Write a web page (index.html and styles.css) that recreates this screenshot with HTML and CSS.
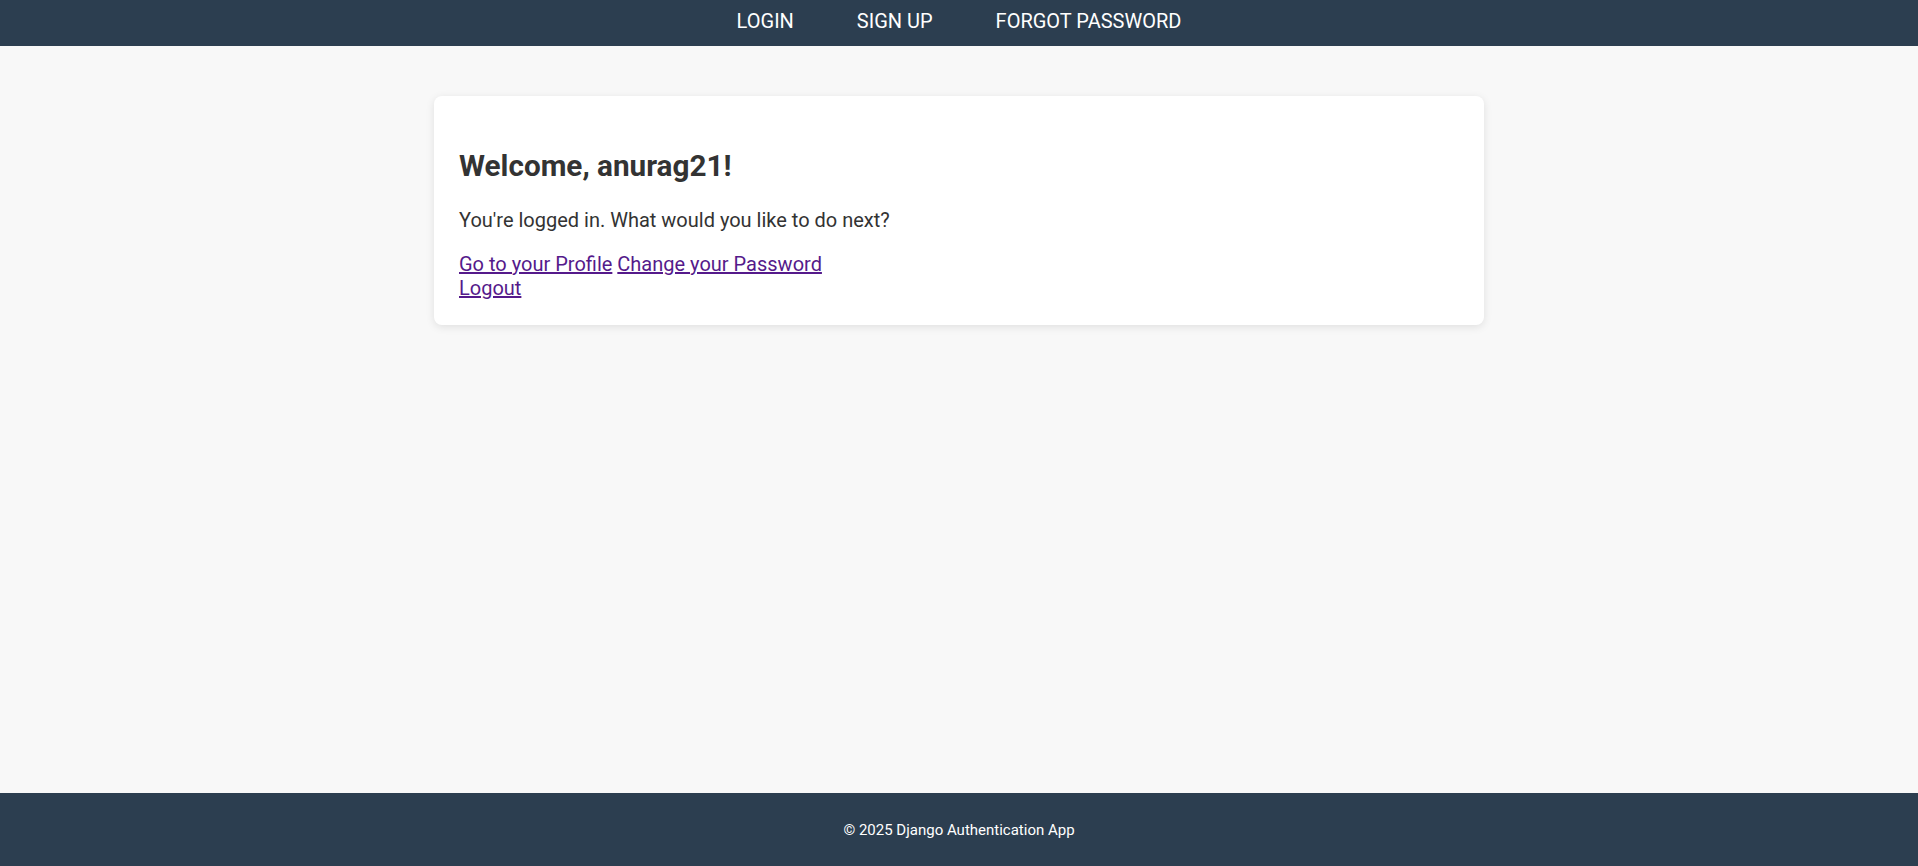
FILE: index.html
```html
<!DOCTYPE html>
<html lang="en">
<head>
<meta charset="utf-8">
<title>Django Authentication App</title>
<link rel="stylesheet" href="styles.css">
</head>
<body>
<div class="page">
  <nav class="navbar">
    <a href="#" class="nav-link">LOGIN</a>
    <a href="#" class="nav-link">SIGN UP</a>
    <a href="#" class="nav-link">FORGOT PASSWORD</a>
  </nav>
  <main class="main">
    <div class="card">
      <h1 class="title">Welcome, anurag21!</h1>
      <p class="lead">You're logged in. What would you like to do next?</p>
      <div class="links">
        <a href="#" class="link">Go to your Profile</a> <a href="#" class="link">Change your Password</a><br>
        <a href="#" class="link">Logout</a>
      </div>
    </div>
  </main>
  <footer class="footer">© 2025 Django Authentication App</footer>
</div>
</body>
</html>
```

FILE: styles.css
```css
* { box-sizing: border-box; }
html, body { margin: 0; padding: 0; }
body {
  font-family: Roboto, "Liberation Sans", sans-serif;
  background: #f8f8f8;
  color: #333;
}
.page {
  min-height: 100vh;
  display: flex;
  flex-direction: column;
}
.navbar {
  height: 46px;
  padding-bottom: 4px;
  background: #2c3e50;
  display: flex;
  justify-content: center;
  align-items: center;
  gap: 63px;
}
.nav-link {
  color: #ffffff;
  text-decoration: none;
  font-size: 20px;
}
.main {
  flex: 1;
  padding-top: 50px;
}
.card {
  width: 1050px;
  margin: 0 auto;
  background: #ffffff;
  border-radius: 8px;
  box-shadow: 0 2px 8px rgba(0,0,0,0.1);
  padding: 25px;
}
.title {
  font-size: 29.7px;
  font-weight: 700;
  margin: 27px 0 25px;
  color: #333;
}
.lead {
  font-size: 20px;
  margin: 0 0 20px;
}
.links {
  font-size: 20px;
}
.link { color: #551a8b; }
.footer {
  height: 73px;
  background: #2c3e50;
  color: #ffffff;
  display: flex;
  align-items: center;
  justify-content: center;
  font-size: 15px;
}
```
